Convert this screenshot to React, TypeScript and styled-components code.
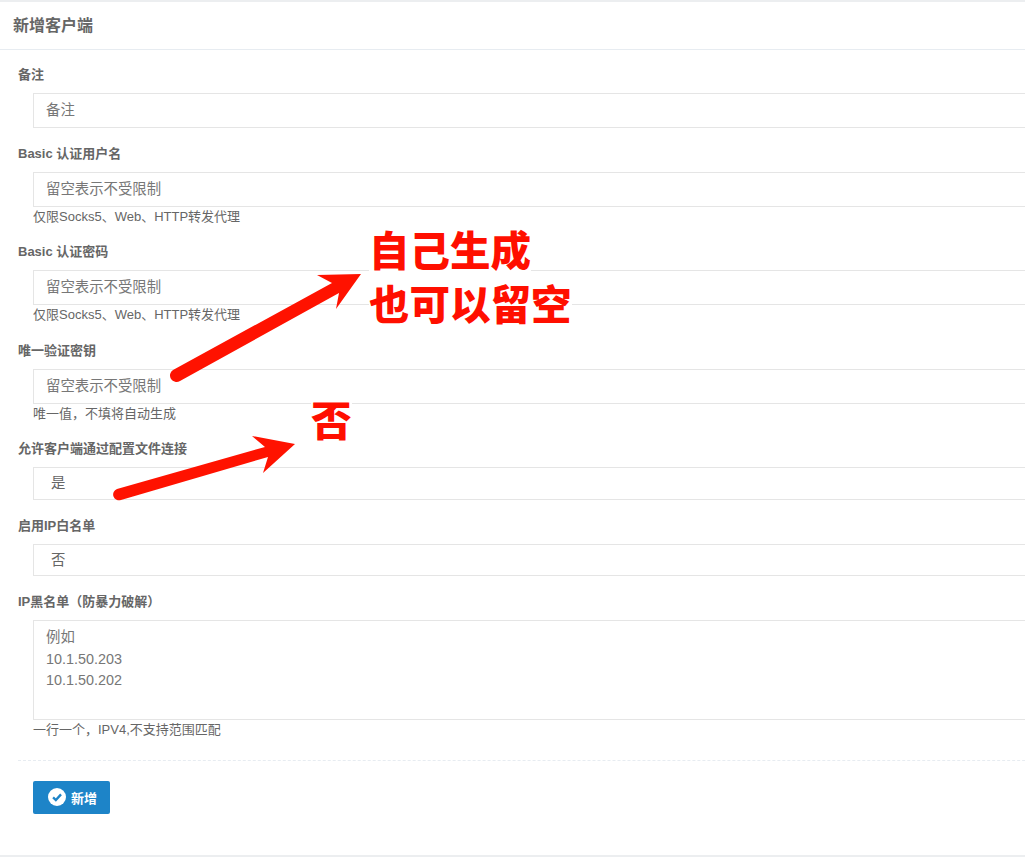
import React from "react";
import styled, { createGlobalStyle } from "styled-components";

const Global = createGlobalStyle`
  html, body { margin: 0; padding: 0; background: #fff; overflow: hidden; }
  body { font-family: "Liberation Sans", "Noto Sans CJK SC", sans-serif; color: #555; }
  * { box-sizing: border-box; }
`;

const Page = styled.div`
  position: relative;
  width: 1025px;
  height: 857px;
  overflow: hidden;
`;

const Portlet = styled.section`
  width: 1200px;
  height: 857px;
  border-top: 2px solid #eceef0;
  border-bottom: 2px solid #eceef0;
`;

const Title = styled.h1`
  margin: 0;
  height: 48px;
  padding-left: 13px;
  font-size: 16px;
  line-height: 48px;
  font-weight: 700;
  color: #666;
  border-bottom: 1px solid #e7ecf1;
`;

const Form = styled.form`
  display: flex;
  flex-direction: column;
  padding: 15px 0 0 18px;
`;

const Field = styled.div<{ $h: number }>`
  height: ${(p) => p.$h}px;
  flex: none;
  display: flex;
  flex-direction: column;
`;

const Label = styled.label`
  height: 28px;
  flex: none;
  font-size: 13px;
  line-height: 20px;
  font-weight: 700;
  color: #666;
`;

const inputBase = `
  display: block;
  margin-left: 15px;
  width: 1150px;
  border: 1px solid #e5e5e5;
  background: #fff;
  color: #666;
  font-family: inherit;
  font-size: 14.4px;
  outline: none;
  border-radius: 0;
`;

const Input = styled.input`
  ${inputBase}
  height: 35px;
  flex: none;
  padding: 0 12px 1px;
  &::placeholder { color: #777; opacity: 1; }
`;

const SelectBox = styled.select`
  ${inputBase}
  height: 32.500px;
  flex: none;
  padding: 0 12px 0 17px;
  appearance: none;
`;

const TextArea = styled.textarea`
  ${inputBase}
  height: 100px;
  flex: none;
  padding: 6px 12px;
  line-height: 21.600px;
  resize: none;
  &::placeholder { color: #777; opacity: 1; }
`;

const Help = styled.div`
  margin-left: 15px;
  font-size: 13px;
  line-height: 19px;
  color: #666;
`;

const Actions = styled.div`
  margin-top: 21px;
  border-top: 1px dashed #e7ecf1;
  padding: 20px 0 0 15px;
`;

const SubmitButton = styled.button`
  width: 77px;
  height: 33px;
  padding: 0 0 0 2px;
  border: 0;
  border-radius: 2px;
  background: #1d84c8;
  color: #fff;
  font-family: inherit;
  font-size: 13px;
  font-weight: 700;
  display: flex;
  align-items: center;
  justify-content: center;
  gap: 5px;
`;

const Note = styled.div<{ $x: number; $y: number }>`
  position: absolute;
  left: ${(p) => p.$x}px;
  top: ${(p) => p.$y}px;
  display: flex;
  flex-direction: column;
  align-items: flex-start;
`;

const NoteLine = styled.div`
  background: #fff;
  color: #ff0f00;
  font-size: 40.500px;
  line-height: 54px;
  font-weight: 900;
  font-family: "Noto Sans CJK SC", sans-serif;
  white-space: nowrap;
`;

const Overlay = styled.svg`
  position: absolute;
  left: 0;
  top: 0;
  pointer-events: none;
`;

const CheckIcon = () => (
  <svg width="18" height="18" viewBox="0 0 17 17" aria-hidden="true">
    <circle cx="8.5" cy="8.5" r="8.5" fill="#fff" />
    <path d="M4.8 8.8 7.4 11.3 12.3 6" fill="none" stroke="#1d84c8" strokeWidth="2.2" />
  </svg>
);

const Arrows = () => (
  <Overlay width="1025" height="857" viewBox="0 0 1025 857">
    <path
      fill="#ff1200"
      d="M173 370 332 283 317 275 361 274 336 309 339 293 180 381 A6 6 0 0 1 173 370Z"
    />
    <path
      fill="#ff1200"
      d="M117 489 265 447 252 436 295 444 263 473 268 457 121 500 A5.800 5.800 0 0 1 117 489Z"
    />
  </Overlay>
);

export default function App() {
  return (
    <Page>
      <Global />
      <Portlet>
        <Title>新增客户端</Title>
        <Form>
          <Field $h={79}>
            <Label>备注</Label>
            <Input placeholder="备注" />
          </Field>
          <Field $h={98.4}>
            <Label>Basic 认证用户名</Label>
            <Input placeholder="留空表示不受限制" />
            <Help>仅限Socks5、Web、HTTP转发代理</Help>
          </Field>
          <Field $h={98.4}>
            <Label>Basic 认证密码</Label>
            <Input placeholder="留空表示不受限制" />
            <Help>仅限Socks5、Web、HTTP转发代理</Help>
          </Field>
          <Field $h={98.4}>
            <Label>唯一验证密钥</Label>
            <Input placeholder="留空表示不受限制" />
            <Help>唯一值，不填将自动生成</Help>
          </Field>
          <Field $h={76.7}>
            <Label>允许客户端通过配置文件连接</Label>
            <SelectBox defaultValue="是">
              <option>是</option>
              <option>否</option>
            </SelectBox>
          </Field>
          <Field $h={76.1}>
            <Label>启用IP白名单</Label>
            <SelectBox defaultValue="否">
              <option>是</option>
              <option>否</option>
            </SelectBox>
          </Field>
          <Field $h={147}>
            <Label>IP黑名单（防暴力破解）</Label>
            <TextArea placeholder={"例如\n10.1.50.203\n10.1.50.202"} />
            <Help>一行一个，IPV4,不支持范围匹配</Help>
          </Field>
          <Actions>
            <SubmitButton type="button">
              <CheckIcon />
              新增
            </SubmitButton>
          </Actions>
        </Form>
      </Portlet>
      <Arrows />
      <Note $x={369} $y={222}>
        <NoteLine>自己生成</NoteLine>
        <NoteLine>也可以留空</NoteLine>
      </Note>
      <Note $x={311} $y={392}>
        <NoteLine>否</NoteLine>
      </Note>
    </Page>
  );
}
